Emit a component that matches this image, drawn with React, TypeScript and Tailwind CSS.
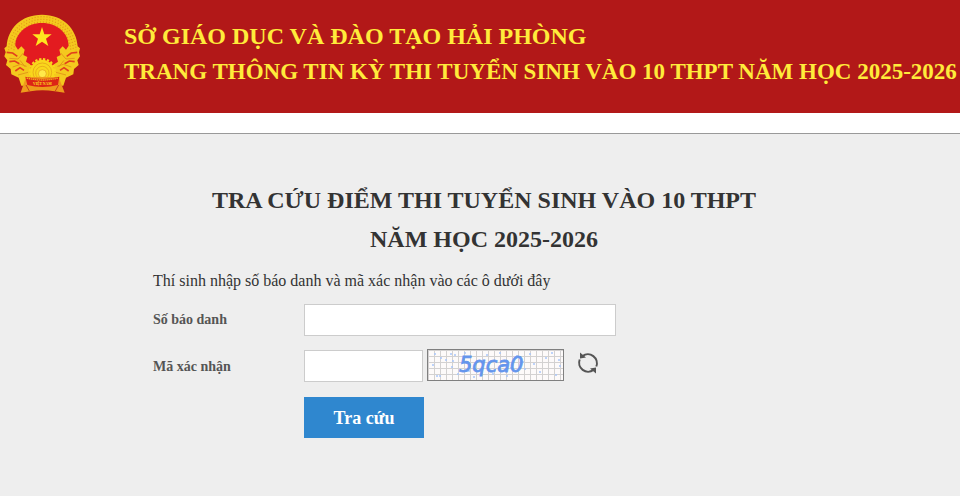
// ── Exam result lookup page ──────────────────────────────────────────────────
// Top: department banner | Below: lookup form with captcha

import { useState } from 'react'
import type { FormEvent } from 'react'

// ── National emblem ──
function Emblem() {
  return (
    <svg viewBox="12 16 228 238" className="h-20 w-[76px] shrink-0" role="img" aria-label="Quốc huy">
      {/* Wheat ring */}
      <path
        d="M126 17C190 17 230 60 233 112L240 118L237 130L240 142L232 154L236 168L222 180L220 196L198 206L190 230H64L56 206L34 196L32 180L18 168L22 154L13 142L17 130L13 118L20 112C23 60 62 17 126 17Z"
        fill="#f4c81e"
      />
      <g fill="none" stroke="#e39a18" strokeWidth="4">
        <path d="M26 124A101 101 0 0 1 228 124" strokeDasharray="3 6" />
        <path d="M34 124A93 93 0 0 1 220 124" strokeDasharray="3 6" strokeDashoffset="4" />
        <path d="M42 124A85 85 0 0 1 212 124" strokeDasharray="3 6" />
      </g>
      {/* Red field */}
      <path
        d="M126 42C172 42 206 74 206 110L198 122L188 112L178 122L182 138L170 144L174 158L162 166L158 184H94L90 166L78 158L82 144L70 138L74 122L64 112L54 122L46 110C46 74 80 42 126 42Z"
        fill="#e31b20"
      />
      {/* Ribbon wound round the sheaves */}
      <g fill="none" stroke="#e2401c" strokeWidth="5">
        <path d="M20 130L38 132L52 142M28 158L44 156L58 164M46 186L60 176L72 184" />
        <path d="M232 130L214 132L200 142M224 158L208 156L194 164M206 186L192 176L180 184" />
      </g>
      <g fill="none" stroke="#e39a18" strokeWidth="3">
        <path d="M28 148L54 150L70 132M38 174L62 166L80 172M54 198L84 190M60 154L76 174" />
        <path d="M224 148L198 150L182 132M214 174L190 166L172 172M198 198L168 190M192 154L176 174" />
      </g>
      {/* Star */}
      <path d="M126 54L133 76H155L138 89L145 111L126 98L107 111L114 89L97 76H119Z" fill="#ffe51f" />
      {/* Cogwheel */}
      <circle cx="127" cy="188" r="36" fill="#f9d71c" />
      <circle cx="127" cy="188" r="38" fill="none" stroke="#f9d71c" strokeWidth="6" strokeDasharray="7 5" />
      <circle cx="127" cy="190" r="28" fill="none" stroke="#e39a18" strokeWidth="2" />
      <circle cx="127" cy="192" r="20" fill="none" stroke="#e39a18" strokeWidth="2" />
      <circle cx="127" cy="194" r="12" fill="#ffe94a" stroke="#e39a18" strokeWidth="2" />
      {/* Banner */}
      <path d="M78 204L62 251L92 247Q127 240 164 247L194 251L176 204Z" fill="#ee9a1c" />
      <path d="M78 228L88 246M176 228L166 246" stroke="#c9401a" strokeWidth="3" />
      <path d="M76 203Q127 217 178 203L174 228Q127 240 82 228Z" fill="#dc2416" />
      <path d="M80 207Q127 219 174 207" fill="none" stroke="#f3b51d" strokeWidth="4" strokeDasharray="4 2" />
      <text
        x="127"
        y="229"
        textAnchor="middle"
        fontFamily="'Liberation Serif', serif"
        fontSize="11"
        fontWeight="700"
        fill="#ffe51f"
      >
        VIỆT NAM
      </text>
    </svg>
  )
}

// Speckles scattered behind the captcha text
const SPECKS = [
  [8, 5], [10, 27], [14, 9], [19, 11], [24, 5], [26, 12], [25, 18], [28, 6], [13, 27], [38, 4],
  [42, 22], [47, 28], [60, 6], [66, 25], [73, 4], [80, 27], [84, 19], [90, 7], [96, 13], [98, 20],
  [103, 5], [107, 15], [113, 23], [119, 9], [125, 4], [129, 26], [132, 11], [133, 17], [31, 25], [6, 16],
]

function Captcha() {
  return (
    <svg viewBox="0 0 137 32" className="h-8 w-[137px]" role="img" aria-label="5qca0">
      <defs>
        <pattern id="grid" width="6" height="6" patternUnits="userSpaceOnUse">
          <path d="M1.5 0V6M0 1.5H6" fill="none" stroke="#d3d1d1" />
        </pattern>
      </defs>
      <rect width="137" height="32" fill="#fdfafa" />
      <rect width="137" height="32" fill="url(#grid)" />
      {SPECKS.map(([x, y]) => (
        <circle key={`${x}-${y}`} cx={x} cy={y} r="1" fill="#a9c6fa" />
      ))}
      <text
        x="32"
        y="23"
        fontFamily="'DejaVu Sans', sans-serif"
        fontSize="21"
        fontStyle="italic"
        fill="#6495ed"
        stroke="#6495ed"
        strokeWidth="0.8"
      >
        5qca0
      </text>
      <rect x="0.5" y="0.5" width="136" height="31" fill="none" stroke="#808080" />
    </svg>
  )
}

function RefreshIcon() {
  return (
    <svg viewBox="0 0 22 22" className="size-[22px]" fill="none" stroke="#555" strokeWidth="2" aria-hidden="true">
      <path d="M5.5 4.1A9 9 0 0 1 19.3 14.5" />
      <path d="M16.5 17.9A9 9 0 0 1 2.7 7.5" />
      <path d="M3 .5V6.6L9 5.6Z" fill="#555" stroke="none" />
      <path d="M19 21.5V15.4L13 16.4Z" fill="#555" stroke="none" />
    </svg>
  )
}

export default function App() {
  const [candidate, setCandidate] = useState('')
  const [code, setCode] = useState('')

  const handleSubmit = (e: FormEvent) => e.preventDefault()

  return (
    <div className="flex min-h-screen flex-col bg-[#eee] font-['Liberation_Serif',serif] text-[#333]">
      {/* ── Banner ── */}
      <header className="flex items-start gap-11 bg-[#b21818] pt-3.5 pb-[19px] pl-1">
        <Emblem />
        <div className="pt-1 leading-9 font-bold whitespace-nowrap text-[#ffeb3b]">
          <p className="text-[24px]">SỞ GIÁO DỤC VÀ ĐÀO TẠO HẢI PHÒNG</p>
          <p className="text-[23px]">TRANG THÔNG TIN KỲ THI TUYỂN SINH VÀO 10 THPT NĂM HỌC 2025-2026</p>
        </div>
      </header>
      <div className="h-[21px] border-b border-[#999] bg-white" />

      {/* ── Lookup form ── */}
      <main className="mx-auto w-full max-w-[654px] pt-[47px]">
        <h1 className="pl-2 text-center text-[24px] leading-[39px] font-bold">
          TRA CỨU ĐIỂM THI TUYỂN SINH VÀO 10 THPT
          <br />
          NĂM HỌC 2025-2026
        </h1>
        <form className="mt-3" onSubmit={handleSubmit}>
          <p className="text-base leading-5">Thí sinh nhập số báo danh và mã xác nhận vào các ô dưới đây</p>

          <div className="mt-[13px] flex items-center">
            <label htmlFor="candidate" className="w-[151px] text-sm font-bold text-[#555]">
              Số báo danh
            </label>
            <input
              id="candidate"
              type="text"
              value={candidate}
              onChange={(e) => setCandidate(e.target.value)}
              className="h-8 w-[312px] border border-[#ccc] bg-white px-2 outline-none"
            />
          </div>

          <div className="mt-[13px] flex items-start">
            <label htmlFor="code" className="w-[151px] pt-2 text-sm font-bold text-[#555]">
              Mã xác nhận
            </label>
            <input
              id="code"
              type="text"
              value={code}
              onChange={(e) => setCode(e.target.value)}
              className="mt-px mr-1 h-8 w-[119px] border border-[#ccc] bg-white px-2 outline-none"
            />
            <Captcha />
            <button type="button" aria-label="Đổi mã xác nhận" className="ml-[13px] pt-[3px]">
              <RefreshIcon />
            </button>
          </div>

          <button type="submit" className="mt-[15px] ml-[151px] h-[41px] w-[120px] bg-[#2f87cf] text-lg font-bold text-white">
            Tra cứu
          </button>
        </form>
      </main>
    </div>
  )
}
